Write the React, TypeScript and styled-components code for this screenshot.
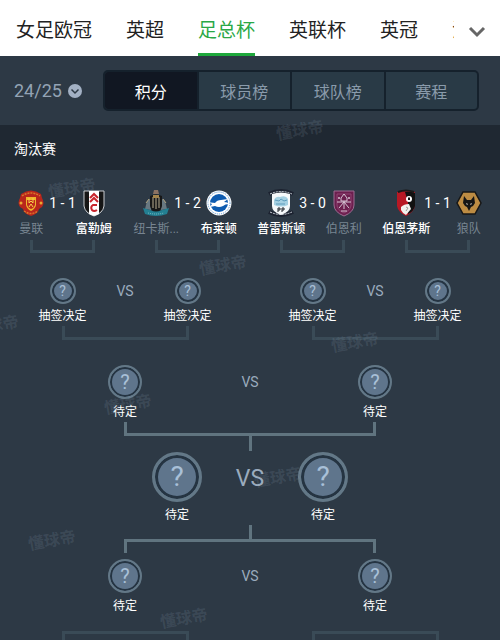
import React from 'react';
import styled, { createGlobalStyle, css } from 'styled-components';

const GlobalStyle = createGlobalStyle`
  * { box-sizing: border-box; }
  body {
    margin: 0;
    background: #2d3945;
    font-family: Roboto, "Noto Sans CJK SC", sans-serif;
  }
  button, select { font: inherit; border: 0; padding: 0; margin: 0; background: none; cursor: pointer; }
`;

const Page = styled.div`
  position: relative;
  overflow: hidden;
  color: #fff;
`;

/* ---------- league bar ---------- */

const LeagueBar = styled.header`
  display: flex;
  align-items: center;
  height: 56px;
  background: #fff;
`;

const LeagueList = styled.nav`
  display: flex;
  flex: 1;
  min-width: 0;
  gap: 34px;
  height: 56px;
  padding-left: 16px;
  overflow: hidden;
`;

const LeagueTab = styled.button<{ $active?: boolean }>`
  flex: none;
  height: 56px;
  padding-top: 8px;
  border-bottom: 3px solid ${p => (p.$active ? '#1fa83c' : 'transparent')};
  color: ${p => (p.$active ? '#2aa846' : '#222')};
  font-size: 19px;
  line-height: 44px;
  white-space: nowrap;
`;

const MoreButton = styled.button`
  display: flex;
  flex: none;
  align-items: center;
  justify-content: center;
  width: 46px;
  height: 56px;
  padding-top: 8px;
`;

/* ---------- season and view switch ---------- */

const Toolbar = styled.div`
  display: flex;
  align-items: center;
  gap: 21px;
  padding: 14px 21px 14px 14px;
`;

const Season = styled.label`
  display: flex;
  align-items: center;
  gap: 6px;
`;

const SeasonSelect = styled.select`
  appearance: none;
  color: #93a3b4;
  font-size: 18px;
  line-height: 24px;
`;

const Segments = styled.div`
  display: flex;
  flex: 1;
  border: 2px solid #15212c;
  border-radius: 5px;
  background: #293a46;
  overflow: hidden;
`;

const Segment = styled.button<{ $active?: boolean }>`
  flex: 1;
  height: 37px;
  color: ${p => (p.$active ? '#fff' : '#8a9bab')};
  background: ${p => (p.$active ? '#111722' : 'transparent')};
  font-size: 16px;
  & + & { border-left: 2px solid #15212c; }
`;

const StageTitle = styled.h2`
  margin: 0;
  padding: 3px 14px 0;
  background: #1f2832;
  font-size: 14px;
  font-weight: 400;
  line-height: 42px;
`;

/* ---------- bracket ---------- */

const Bracket = styled.main`
  display: flex;
  flex-direction: column;
`;

const Round = styled.section<{ $columns: number; $top: number }>`
  display: grid;
  grid-template-columns: repeat(${p => p.$columns}, 1fr);
  padding-top: ${p => p.$top}px;
`;

const Pair = styled.div<{ $narrow?: boolean }>`
  display: grid;
  grid-template-columns: 1fr 1fr;
  ${p => p.$narrow && css`width: 292px; margin: 0 auto;`}
`;

const Side = styled.div<{ $gap: number }>`
  display: flex;
  flex-direction: column;
  align-items: center;
  gap: ${p => p.$gap}px;
  min-width: 0;
  grid-row: 1;
  grid-column: 1;
  &:last-child { grid-column: 2; }
`;

const Middle = styled.div<{ $height: number; $size: number; $score?: boolean }>`
  grid-area: 1 / 1 / 2 / -1;
  justify-self: center;
  color: ${p => (p.$score ? '#fff' : '#9aabbd')};
  font-size: ${p => p.$size}px;
  line-height: ${p => p.$height}px;
  white-space: nowrap;
`;

const TeamName = styled.span<{ $tone: 'win' | 'lose' | 'open' }>`
  color: ${p => (p.$tone === 'lose' ? '#788591' : '#fff')};
  font-size: 12px;
  font-weight: ${p => (p.$tone === 'win' ? 500 : 400)};
  line-height: 18px;
  white-space: nowrap;
`;

const Badge = styled.span<{ $size: number; $ring: number; $font: number }>`
  display: flex;
  align-items: center;
  justify-content: center;
  width: ${p => p.$size}px;
  height: ${p => p.$size}px;
  border: ${p => p.$ring}px solid #637887;
  border-radius: 50%;
  background: #5f758c;
  box-shadow: inset 0 0 0 ${p => p.$ring}px #253442;
  color: #a9c0d8;
  font-size: ${p => p.$font}px;
  line-height: 1;
`;

const Connector = styled.div<{ $strong?: boolean; $up?: boolean; $height: number; $gap: number }>`
  width: calc(50% + 2px);
  height: ${p => p.$height}px;
  margin: ${p => p.$gap}px auto 0;
  border: ${p => (p.$strong ? '3px solid #60747f' : '3px solid #3a4b57')};
  ${p => (p.$up ? 'border-bottom: 0;' : 'border-top: 0;')}
`;

const Stem = styled.div<{ $height: number; $gap: number }>`
  width: 3px;
  height: ${p => p.$height}px;
  margin: ${p => p.$gap}px auto 0;
  background: #60747f;
`;

const Crest = styled.svg`
  display: block;
  width: 30px;
  height: 30px;
`;

/* ---------- watermark ---------- */

const WatermarkLayer = styled.div`
  position: absolute;
  inset: 0;
  overflow: hidden;
  pointer-events: none;
`;

const Watermark = styled.span<{ $x: number; $y: number }>`
  position: absolute;
  left: ${p => p.$x}%;
  top: ${p => p.$y}px;
  transform: translate(-50%, -50%) rotate(-10deg);
  color: rgba(160, 180, 200, 0.15);
  font-size: 16px;
  font-weight: 700;
  line-height: 20px;
  white-space: nowrap;
`;

/* ---------- crests ---------- */

const ManUnited = () => (
  <Crest viewBox="0 0 30 30" aria-hidden="true">
    <path d="M5 6q10-7 20 0l1 4q3 5 0 9l-3 2q-1 5-8 7-7-2-8-7l-3-2q-3-4 0-9z" fill="#b8261c" />
    <path d="M6 8q9-6 18 0M8 23q7 5 14 0" fill="none" stroke="#d9772a" strokeWidth="1.5" strokeDasharray="2 1" />
    <circle cx="5" cy="15" r="1.5" fill="#e8aa32" /><circle cx="25" cy="15" r="1.5" fill="#e8aa32" />
    <path d="M10 9h10v8q-1 4-5 6-4-2-5-6z" fill="#f0b52c" />
    <path d="M11 12h8v5q-1 3-4 4-3-1-4-4z" fill="#c02a1d" />
    <path d="M13 10v5l2-2 2 2v-5M13 19l2-3 2 3" stroke="#f7d04a" fill="none" />
  </Crest>
);

const Fulham = () => (
  <Crest viewBox="0 0 30 30" aria-hidden="true">
    <path d="M5 3h20v15q-1 7-10 10Q6 25 5 18z" fill="#151515" stroke="#c9ccd0" />
    <path d="M10 3h10v23l-5 2-5-2z" fill="#fff" />
    <path d="M11 10l4-4 4 4M11 14l4-4 4 4M18 17h-4q-3 2-1 5 2 2 5 0" fill="none" stroke="#c9252d" strokeWidth="2" />
  </Crest>
);

const Newcastle = () => (
  <Crest viewBox="0 0 30 30" aria-hidden="true">
    <path d="M12 6l1-4h4l1 4z" fill="#8b7263" />
    <path d="M4 21l2-8 4-3v12zM26 21l-2-8-4-3v12z" fill="#687881" />
    <path d="M5 15l3-4M25 15l-3-4" stroke="#b0a27e" />
    <path d="M9 8q6-3 12 0v10q-1 5-6 7-5-2-6-7z" fill="#171717" />
    <path d="M12 9v11M15 8v13M18 9v11" stroke="#b9ae92" />
    <path d="M12 7h6v3h-6z" fill="#a5854c" />
    <path d="M2 20l7 2q6 3 12 0l7-2-2 6q-11 4-22 0z" fill="#237f92" />
    <path d="M7 25q8 2 16 0" stroke="#7fc0c5" fill="none" strokeDasharray="1 1" />
  </Crest>
);

const Brighton = () => (
  <Crest viewBox="0 0 30 30" aria-hidden="true">
    <circle cx="15" cy="15" r="12.5" fill="#fff" />
    <circle cx="15" cy="15" r="11" fill="none" stroke="#4b8bcb" strokeDasharray="1 1" />
    <circle cx="15" cy="15" r="9" fill="#0d5bb0" />
    <path d="M3 14l8 1q2-3 6-3l7-1-4 3q4 0 5 2-4 0-6 2-4 2-8 0l-5 1 2-3z" fill="#fff" />
  </Crest>
);

const Preston = () => (
  <Crest viewBox="0 0 30 30" aria-hidden="true">
    <path d="M3 6q12-6 24 0M3 24q12 6 24 0" fill="none" stroke="#1c2230" strokeWidth="4" />
    <path d="M4 6q11-5 22 0M4 24q11 5 22 0" fill="none" stroke="#d4dce3" strokeDasharray="2 1" />
    <path d="M6 6q9-3 18 0v12q0 6-9 9-9-3-9-9z" fill="#f5f8fa" />
    <path d="M8 12q2-4 6-3 6-2 8 2v6q-7 3-14 0z" fill="#a5d0e2" />
    <path d="M9 12l4 1 2-2 3 2 3-1M10 16h9" stroke="#5c9bbb" fill="none" />
    <path d="M12 24v-4h2v2h-2M16 24v-4h2v2h-2" fill="none" stroke="#20242b" />
  </Crest>
);

const Burnley = () => (
  <Crest viewBox="0 0 30 30" aria-hidden="true">
    <path d="M5 3h20v14q0 7-10 11Q5 24 5 17z" fill="#6c1f4e" stroke="#9b6d91" />
    <path d="M8 6h14v11q0 5-7 8-7-3-7-8z" fill="none" stroke="#8f4473" />
    <path d="M12 10l3-4 3 4v3h-6zM8 14h14M10 20l5-6 5 6M15 13v8M12 23h6" fill="none" stroke="#d5c4d3" />
    <circle cx="10" cy="10" r="1" fill="#d5c4d3" /><circle cx="20" cy="10" r="1" fill="#d5c4d3" />
  </Crest>
);

const Bournemouth = () => (
  <Crest viewBox="0 0 30 30" aria-hidden="true">
    <path d="M6 4q9-3 18 0v14q-1 6-9 10-8-4-9-10z" fill="#b81824" />
    <path d="M14 4q6-1 10 1v13q-1 5-7 8V14z" fill="#111" />
    <path d="M7 4q8-3 16 0" stroke="#1a1a1a" strokeWidth="2" fill="none" />
    <circle cx="18" cy="11" r="3" fill="#fff" />
    <path d="M17 10l1-1 1 1v2h-2z" fill="#111" />
    <path d="M10 19q3-3 8-3l2 5-5 6q-3-1-5-5z" fill="#f1f1ee" />
    <path d="M15 19l2 1-2 3" fill="none" stroke="#9b9b96" />
  </Crest>
);

const Wolves = () => (
  <Crest viewBox="0 0 30 30" aria-hidden="true">
    <path d="M9 4h12l6 11-6 11H9L3 15z" fill="#bd8c43" stroke="#171717" strokeWidth="1.5" />
    <path d="M10 8l3 4h4l3-4 1 7-2 3-2 1-2 4-2-4-2-1-2-3z" fill="#151515" />
    <path d="M12 15l2 1-1 1zM18 15l-2 1 1 1z" fill="#e8e4da" />
  </Crest>
);

/* ---------- data ---------- */

type Tone = 'win' | 'lose' | 'open';
type Team = { name: string; tone: Tone; crest: React.FC };

const leagues = ['女足欧冠', '英超', '足总杯', '英联杯', '英冠', '法甲'];
const views = ['积分', '球员榜', '球队榜', '赛程'];

const matches: { home: Team; away: Team; score: string }[] = [
  { home: { name: '曼联', tone: 'lose', crest: ManUnited }, away: { name: '富勒姆', tone: 'win', crest: Fulham }, score: '1 - 1' },
  { home: { name: '纽卡斯...', tone: 'lose', crest: Newcastle }, away: { name: '布莱顿', tone: 'win', crest: Brighton }, score: '1 - 2' },
  { home: { name: '普雷斯顿', tone: 'win', crest: Preston }, away: { name: '伯恩利', tone: 'lose', crest: Burnley }, score: '3 - 0' },
  { home: { name: '伯恩茅斯', tone: 'win', crest: Bournemouth }, away: { name: '狼队', tone: 'lose', crest: Wolves }, score: '1 - 1' },
];

const watermarks: [number, number][] = [
  [60, 131], [14.4, 189], [44.6, 266], [-1, 326], [71, 343],
  [25.6, 405], [55.6, 478], [10.4, 541], [36.8, 619],
];

const badgeSizes = {
  small: { size: 26, ring: 2, font: 14, vs: 14, vsHeight: 26, gap: 3 },
  medium: { size: 34, ring: 2, font: 20, vs: 14, vsHeight: 34, gap: 4 },
  large: { size: 50, ring: 3, font: 28, vs: 23, vsHeight: 54, gap: 4 },
};

function TeamSide({ team }: { team: Team }) {
  const Logo = team.crest;
  return (
    <Side $gap={2}>
      <Logo />
      <TeamName $tone={team.tone}>{team.name}</TeamName>
    </Side>
  );
}

function OpenTie({ kind, label }: { kind: keyof typeof badgeSizes; label: string }) {
  const s = badgeSizes[kind];
  const side = (
    <Side $gap={s.gap}>
      <Badge $size={s.size} $ring={s.ring} $font={s.font}>?</Badge>
      <TeamName $tone="open">{label}</TeamName>
    </Side>
  );
  return (
    <Pair $narrow={kind === 'large'}>
      {side}
      <Middle $height={s.vsHeight} $size={s.vs}>VS</Middle>
      {side}
    </Pair>
  );
}

export default function App() {
  return (
    <Page>
      <GlobalStyle />
      <LeagueBar>
        <LeagueList aria-label="赛事">
          {leagues.map(name => (
            <LeagueTab key={name} type="button" $active={name === '足总杯'}>{name}</LeagueTab>
          ))}
        </LeagueList>
        <MoreButton type="button" aria-label="更多赛事">
          <svg width="18" height="12" viewBox="0 0 18 12" fill="none" stroke="#666" strokeWidth="3" aria-hidden="true">
            <path d="M2 2l7 7 7-7" />
          </svg>
        </MoreButton>
      </LeagueBar>

      <Toolbar>
        <Season>
          <SeasonSelect aria-label="赛季" defaultValue="24/25">
            <option value="24/25">24/25</option>
          </SeasonSelect>
          <svg width="14" height="14" viewBox="0 0 14 14" aria-hidden="true">
            <circle cx="7" cy="7" r="7" fill="#a3b1c4" />
            <path d="M3.5 5.5L7 9l3.5-3.5" fill="none" stroke="#2d3945" strokeWidth="1.5" />
          </svg>
        </Season>
        <Segments>
          {views.map(name => (
            <Segment key={name} type="button" $active={name === '积分'}>{name}</Segment>
          ))}
        </Segments>
      </Toolbar>

      <StageTitle>淘汰赛</StageTitle>

      <Bracket>
        <Round $columns={4} $top={18}>
          {matches.map(m => (
            <div key={m.home.name}>
              <Pair>
                <TeamSide team={m.home} />
                <Middle $height={30} $size={14} $score>{m.score}</Middle>
                <TeamSide team={m.away} />
              </Pair>
              <Connector $height={13} $gap={2} />
            </div>
          ))}
        </Round>

        <Round $columns={2} $top={25}>
          {['left', 'right'].map(id => (
            <div key={id}>
              <OpenTie kind="small" label="抽签决定" />
              <Connector $height={14} $gap={1} />
            </div>
          ))}
        </Round>

        <Round $columns={1} $top={25}>
          <OpenTie kind="medium" label="待定" />
          <Connector $strong $height={14} $gap={1} />
          <Stem $height={15} $gap={0} />
        </Round>

        <Round $columns={1} $top={1}>
          <OpenTie kind="large" label="待定" />
          <Stem $height={14} $gap={1} />
        </Round>

        <Round $columns={1} $top={0}>
          <Connector $strong $up $height={14} $gap={0} />
        </Round>

        <Round $columns={1} $top={6}>
          <OpenTie kind="medium" label="待定" />
        </Round>

        <Round $columns={2} $top={16}>
          <Connector $up $height={9} $gap={0} />
          <Connector $up $height={9} $gap={0} />
        </Round>
      </Bracket>

      <WatermarkLayer aria-hidden="true">
        {watermarks.map(([x, y]) => (
          <Watermark key={`${x}-${y}`} $x={x} $y={y}>懂球帝</Watermark>
        ))}
      </WatermarkLayer>
    </Page>
  );
}
